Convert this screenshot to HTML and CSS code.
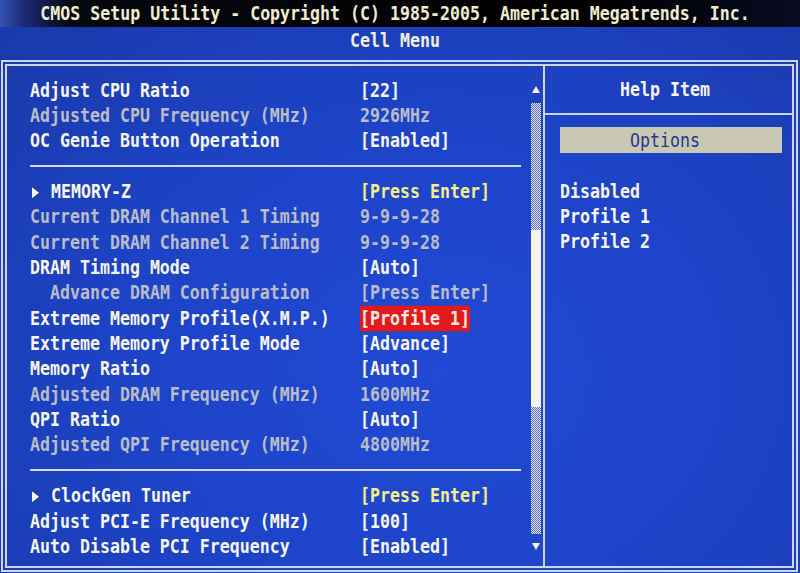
FILE: index.html
```html
<!DOCTYPE html>
<html lang="en">

<head>
  <meta charset="UTF-8">
  <meta name="viewport" content="width=device-width, initial-scale=1.0">
  <title>CMOS Setup Utility - Cell Menu</title>
  <link rel="stylesheet" href="styles.css">
</head>

<body>
  <div class="title-bar"><span>CMOS Setup Utility - Copyright (C) 1985-2005, American Megatrends, Inc.</span></div>
  <div class="menu-name"><span>Cell Menu</span></div>

  <div class="frame">
    <div class="setup">
      <div class="items">
        <div class="row"><span class="label">Adjust CPU Ratio</span><span class="value">[22]</span></div>
        <div class="row grey"><span class="label">Adjusted CPU Frequency (MHz)</span><span class="value">2926MHz</span></div>
        <div class="row"><span class="label">OC Genie Button Operation</span><span class="value">[Enabled]</span></div>
        <div class="divider"></div>

        <div class="row"><span class="label"><svg class="marker" width="10" height="9" viewBox="0 0 10 9"><polygon points="1,0 8,4.5 1,9" /></svg>MEMORY-Z</span><span class="value yellow">[Press Enter]</span></div>
        <div class="row grey"><span class="label">Current DRAM Channel 1 Timing</span><span class="value">9-9-9-28</span></div>
        <div class="row grey"><span class="label">Current DRAM Channel 2 Timing</span><span class="value">9-9-9-28</span></div>
        <div class="row"><span class="label">DRAM Timing Mode</span><span class="value">[Auto]</span></div>
        <div class="row grey"><span class="label indent">Advance DRAM Configuration</span><span class="value">[Press Enter]</span></div>
        <div class="row"><span class="label">Extreme Memory Profile(X.M.P.)</span><span class="value selected">[Profile 1]</span></div>
        <div class="row"><span class="label">Extreme Memory Profile Mode</span><span class="value">[Advance]</span></div>
        <div class="row"><span class="label">Memory Ratio</span><span class="value">[Auto]</span></div>
        <div class="row grey"><span class="label">Adjusted DRAM Frequency (MHz)</span><span class="value">1600MHz</span></div>
        <div class="row"><span class="label">QPI Ratio</span><span class="value">[Auto]</span></div>
        <div class="row grey"><span class="label">Adjusted QPI Frequency (MHz)</span><span class="value">4800MHz</span></div>
        <div class="divider"></div>

        <div class="row"><span class="label"><svg class="marker" width="10" height="9" viewBox="0 0 10 9"><polygon points="1,0 8,4.5 1,9" /></svg>ClockGen Tuner</span><span class="value yellow">[Press Enter]</span></div>
        <div class="row"><span class="label">Adjust PCI-E Frequency (MHz)</span><span class="value">[100]</span></div>
        <div class="row"><span class="label">Auto Disable PCI Frequency</span><span class="value">[Enabled]</span></div>
      </div>

      <div class="scroll">
        <div class="arrow"><svg width="10" height="8" viewBox="0 0 10 8"><polygon points="5,0 9,7 1,7" /></svg></div>
        <div class="track">
          <div class="thumb"></div>
        </div>
        <div class="arrow"><svg width="10" height="8" viewBox="0 0 10 8"><polygon points="1,1 9,1 5,8" /></svg></div>
      </div>
    </div>

    <div class="help">
      <div class="help-title"><span>Help Item</span></div>
      <div class="help-body">
        <div class="options"><span>Options</span></div>
        <div class="row"><span>Disabled</span></div>
        <div class="row"><span>Profile 1</span></div>
        <div class="row"><span>Profile 2</span></div>
      </div>
    </div>
  </div>
</body>

</html>
```

FILE: styles.css
```css
* {
  margin: 0;
  padding: 0;
  box-sizing: border-box;
}

body {
  width: 800px;
  height: 573px;
  overflow: hidden;
  background: radial-gradient(ellipse 75% 85% at 55% 65%, #2149d4 0%, #1d43c6 55%, #1a39aa 100%);
  font: bold 16.6px/21px "DejaVu Sans Mono", monospace;
  color: #f6f6ee;
}

/* text mode glyphs are taller than the mono font, stretch them */
.title-bar span,
.menu-name span,
.row span,
.help-title span,
.options span {
  display: inline-block;
  transform: scaleY(1.22);
  white-space: pre;
}

.title-bar {
  height: 27px;
  display: flex;
  align-items: center;
  justify-content: center;
  padding-right: 10px;
  background: linear-gradient(90deg, #3554b8 0, #1b2a74 3%, #05070f 9%, #000 75%, #070b22 100%);
  color: #efecce;
}

.menu-name {
  height: 33px;
  padding: 3px 10px 0 0;
  text-align: center;
  color: #f2f0dc;
}

.frame {
  height: 512px;
  margin: 0 2px 0 1px;
  border: 6px double #cdd4e4;
  display: flex;
}

.setup {
  width: 536px;
  display: flex;
  padding: 11.5px 2px 0 0;
}

.items {
  flex: 1;
  padding-left: 23px;
}

.row {
  height: 25.35px;
  display: flex;
  align-items: center;
}

.label {
  width: 330px;
}

.label.indent {
  padding-left: 20px;
}

.row.grey {
  color: #b9bdc7;
}

.value.yellow {
  color: #f3ef8c;
}

.value.selected {
  background: #e11b1b;
  color: #fde6e6;
}

.marker {
  margin: 0 10px 0 1px;
  fill: #f6f6ee;
}

.divider {
  height: 25.35px;
  display: flex;
  align-items: center;
  padding-right: 10px;
}

.divider::before {
  content: "";
  flex: 1;
  height: 2px;
  background: #d4dae8;
}

.scroll {
  width: 10px;
  height: 481.65px;
  display: flex;
  flex-direction: column;
}

.arrow {
  height: 25.35px;
  display: flex;
  align-items: center;
  justify-content: center;
}

.arrow svg {
  fill: #f6f6ee;
}

.track {
  flex: 1;
  background: repeating-conic-gradient(#e8eaf0 0 25%, #5568bc 0 50%) 0 0 / 2px 2px;
}

.thumb {
  margin-top: 127px;
  height: 177.5px;
  background: #f4f4ec;
}

.help {
  flex: 1;
  border-left: 2px solid #cdd4e4;
  display: flex;
  flex-direction: column;
}

.help-title {
  height: 49px;
  border-bottom: 2px solid #cdd4e4;
  display: flex;
  align-items: center;
  justify-content: center;
  padding-right: 7px;
}

.help-body {
  padding: 12px 10px 0 15px;
}

.options {
  height: 26px;
  margin-bottom: 25.6px;
  padding-right: 12px;
  display: flex;
  align-items: center;
  justify-content: center;
  background: #c9c8b3;
  color: #27378c;
  font-weight: normal;
}
```
